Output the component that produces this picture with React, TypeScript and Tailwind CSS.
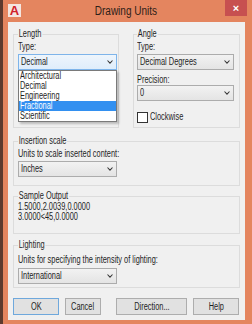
import React from "react";

const SQ = "inline-block origin-left scale-x-[0.74] whitespace-nowrap";
const SQC = "inline-block origin-center scale-x-[0.74] whitespace-nowrap";

function Chevron() {
  return (
    <svg width="6" height="4" viewBox="0 0 6 4" className="shrink-0">
      <path d="M0.5 0.5 L3 3.2 L5.5 0.5" stroke="#3a3a3a" fill="none" strokeWidth="1.1" />
    </svg>
  );
}

function Select({ value, className = "", focused = false }: { value: string; className?: string; focused?: boolean }) {
  return (
    <div
      className={`h-[16px] border flex items-center pl-[2px] pr-[3px] ${
        focused
          ? "border-[#7eb4ea] bg-linear-to-b from-[#eef5fc] to-[#dfedfb]"
          : "border-[#acacac] bg-linear-to-b from-[#f2f2f2] to-[#e4e4e4]"
      } ${className}`}
    >
      <span className="flex-1 leading-[14px] overflow-hidden">
        <span className={SQ}>{value}</span>
      </span>
      <Chevron />
    </div>
  );
}

function Group({
  label,
  className = "",
  children,
}: {
  label: string;
  className?: string;
  children?: React.ReactNode;
}) {
  return (
    <div className={`border border-[#dcdcdc] flex flex-col items-start ${className}`}>
      <span className={`-mt-[7px] px-[1px] bg-[#f0f0f0] leading-[12px] ${SQ}`}>{label}</span>
      {children}
    </div>
  );
}

function Button({ label, className = "", isDefault = false }: { label: string; className?: string; isDefault?: boolean }) {
  return (
    <div
      className={`h-[17px] flex items-center justify-center bg-[#e1e1e1] border ${
        isDefault ? "border-[#6fa8dc]" : "border-[#adadad]"
      } ${className}`}
    >
      <span className={`leading-[12px] ${SQC}`}>{label}</span>
    </div>
  );
}

export default function App() {
  const items = ["Architectural", "Decimal", "Engineering", "Fractional", "Scientific"];
  return (
    <div className="w-[252px] h-[324px] bg-[#e4855f] border-l-[3px] border-[#5c3a2e] flex flex-col overflow-hidden font-['Liberation_Sans',Arial,sans-serif] text-[10px] text-[#1e1e1e]">
      {/* Title bar */}
      <div className="h-[22px] flex items-start shrink-0">
        <div className="mt-[4px] ml-[5px] w-[13px] h-[13px] bg-[#f4e6e0] flex items-center justify-center">
          <span className="text-[#d0202a] font-bold text-[13px] leading-none">A</span>
        </div>
        <div className="flex-1 pl-[6px] flex justify-center text-[12.5px] leading-[22px] text-[#2e1e18]">
          <span className="inline-block origin-center scale-x-[0.8] whitespace-nowrap">Drawing Units</span>
        </div>
        <div className="w-[22px] h-[16px] mr-[5px] bg-[#c75050] flex items-center justify-center">
          <span className="text-white font-bold text-[11px] leading-none">×</span>
        </div>
      </div>

      {/* Client area */}
      <div className="ml-[5px] w-[237px] h-[298px] bg-[#f0f0f0] px-[5px] pt-[12px] flex flex-col">
        {/* Length / Angle */}
        <div className="flex gap-[14px]">
          <Group label="Length" className="w-[106px] h-[94px] pl-[4px]">
            <span className={`mt-[1px] leading-[12px] ${SQ}`}>Type:</span>
            <div className="relative mt-[1px] w-[99px]">
              <Select value="Decimal" focused />
              <div className="absolute left-0 top-full w-[99px] bg-white border border-[#7a7a7a] shadow-[2px_2px_2px_rgba(0,0,0,0.22)] flex flex-col z-10">
                {items.map((it) => (
                  <div
                    key={it}
                    className={`h-[10px] pl-[1px] leading-[10px] ${
                      it === "Fractional" ? "bg-[#3390f0] text-white" : ""
                    }`}
                  >
                    <span className={SQ}>{it}</span>
                  </div>
                ))}
              </div>
            </div>
          </Group>

          <Group label="Angle" className="w-[107px] h-[94px] pl-[3px]">
            <span className={`mt-[1px] leading-[12px] ${SQ}`}>Type:</span>
            <Select value="Decimal Degrees" className="mt-[1px] w-[97px]" />
            <span className={`mt-[4px] leading-[11px] ${SQ}`}>Precision:</span>
            <Select value="0" className="w-[97px]" />
            <div className="mt-[10px] h-[12px] flex items-center">
              <div className="w-[11px] h-[11px] border border-[#333333] bg-white" />
              <span className={`ml-[2px] leading-[12px] ${SQ}`}>Clockwise</span>
            </div>
          </Group>
        </div>

        {/* Insertion scale */}
        <Group label="Insertion scale" className="mt-[13px] h-[45px] pl-[4px]">
          <span className={`mt-[1px] leading-[11px] ${SQ}`}>Units to scale inserted content:</span>
          <Select value="Inches" className="mt-[2px] w-[99px]" />
        </Group>

        {/* Sample output */}
        <Group label="Sample Output" className="mt-[10px] h-[38px] pl-[4px]">
          <span className={`leading-[10px] ${SQ}`}>1.5000,2.0039,0.0000</span>
          <span className={`leading-[10px] ${SQ}`}>3.0000&lt;45,0.0000</span>
        </Group>

        {/* Lighting */}
        <Group label="Lighting" className="mt-[11px] h-[43px] pl-[4px]">
          <span className={`mt-[3px] leading-[11px] ${SQ}`}>Units for specifying the intensity of lighting:</span>
          <Select value="International" className="mt-[3px] w-[99px]" />
        </Group>

        {/* Buttons */}
        <div className="mt-[10px] flex">
          <Button label="OK" isDefault className="w-[46px]" />
          <Button label="Cancel" className="ml-[6px] w-[36px]" />
          <Button label="Direction..." className="ml-[15px] w-[71px]" />
          <Button label="Help" className="ml-[6px] w-[46px]" />
        </div>
      </div>
    </div>
  );
}
